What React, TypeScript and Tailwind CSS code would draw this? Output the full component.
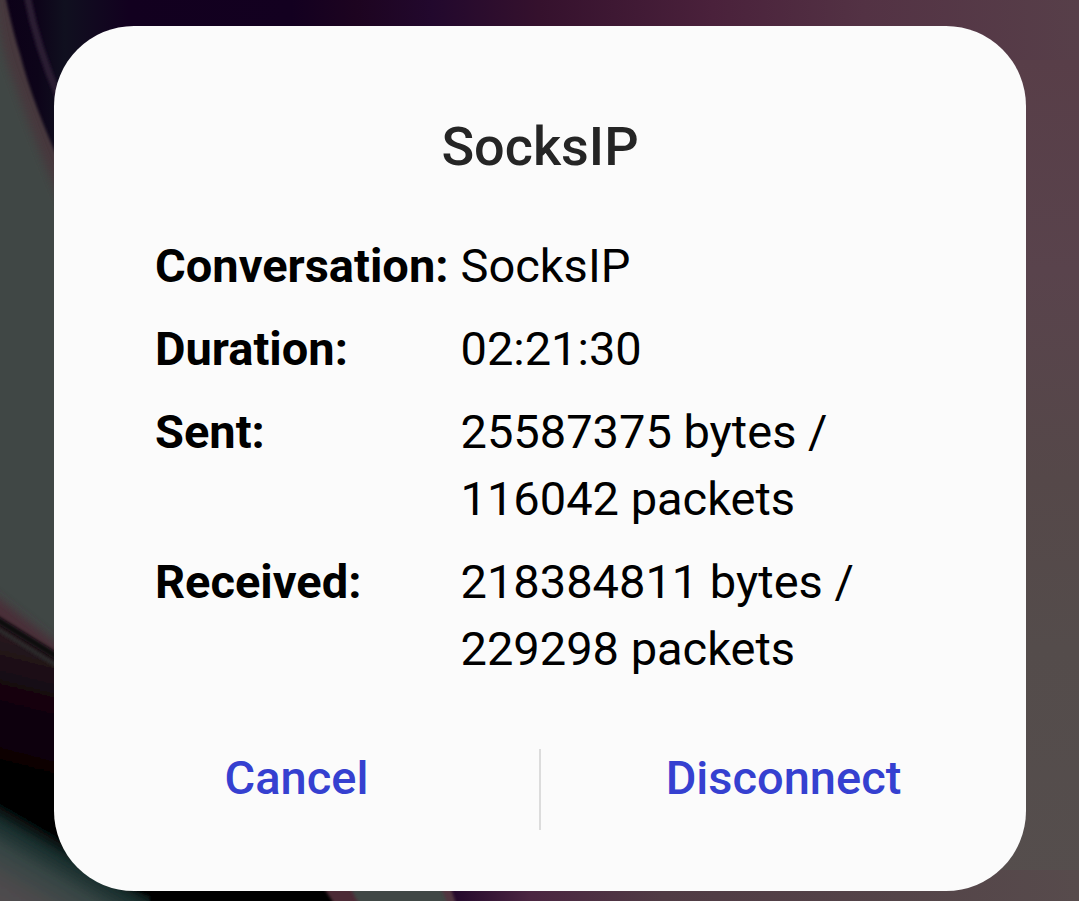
import { Fragment } from "react";

const stats = [
  { label: "Conversation:", value: "SocksIP" },
  { label: "Duration:", value: "02:21:30" },
  { label: "Sent:", value: "25587375 bytes / 116042 packets" },
  { label: "Received:", value: "218384811 bytes / 229298 packets" },
];

function Wallpaper() {
  return (
    <svg
      className="absolute inset-0 h-full w-full"
      viewBox="0 0 1079 901"
      preserveAspectRatio="none"
      aria-hidden="true"
    >
      <defs>
        <linearGradient id="sky" x1="0" x2="1" y1="0" y2="0">
          <stop offset="0" stopColor="#0c0018" />
          <stop offset="0.035" stopColor="#0d0419" />
          <stop offset="0.06" stopColor="#10101f" />
          <stop offset="0.12" stopColor="#12001f" />
          <stop offset="0.27" stopColor="#130020" />
          <stop offset="0.33" stopColor="#1d0420" />
          <stop offset="0.4" stopColor="#22082d" />
          <stop offset="0.5" stopColor="#35112d" />
          <stop offset="0.66" stopColor="#4a213b" />
          <stop offset="0.8" stopColor="#533244" />
          <stop offset="1" stopColor="#573f49" />
        </linearGradient>
        <linearGradient id="edge" x1="0" x2="0" y1="0" y2="1">
          <stop offset="0" stopColor="#583e48" />
          <stop offset="0.25" stopColor="#59434c" />
          <stop offset="0.5" stopColor="#554849" />
          <stop offset="0.7" stopColor="#544c4b" />
          <stop offset="1" stopColor="#554e4d" />
        </linearGradient>
        <linearGradient id="floor" x1="0" x2="1" y1="0" y2="0">
          <stop offset="0" stopColor="#1d0428" />
          <stop offset="0.14" stopColor="#4b2541" />
          <stop offset="0.35" stopColor="#503b44" />
          <stop offset="1" stopColor="#574b4c" />
        </linearGradient>
        <linearGradient
          id="shade"
          gradientUnits="userSpaceOnUse"
          x1="40"
          x2="4"
          y1="650"
          y2="790"
        >
          <stop offset="0" stopColor="#25171c" />
          <stop offset="0.3" stopColor="#140610" />
          <stop offset="0.65" stopColor="#0b0208" />
          <stop offset="1" stopColor="#000000" />
        </linearGradient>
        <linearGradient
          id="ground"
          gradientUnits="userSpaceOnUse"
          x1="40"
          x2="-4"
          y1="824"
          y2="900"
        >
          <stop offset="0" stopColor="#000000" />
          <stop offset="0.2" stopColor="#172c2b" />
          <stop offset="0.45" stopColor="#354443" />
          <stop offset="0.8" stopColor="#4c4a4c" />
          <stop offset="1" stopColor="#504b4e" />
        </linearGradient>
        <filter id="soft" filterUnits="userSpaceOnUse" x="-40" y="-40" width="1159" height="981">
          <feGaussianBlur stdDeviation="1.5" />
        </filter>
        <filter id="softer" filterUnits="userSpaceOnUse" x="-40" y="-40" width="1159" height="981">
          <feGaussianBlur stdDeviation="5" />
        </filter>
      </defs>

      <rect width="1079" height="901" fill="url(#sky)" />
      <rect x="1000" y="60" width="79" height="841" fill="url(#edge)" />
      <rect x="440" y="870" width="639" height="31" fill="url(#floor)" />

      {/* Left rim */}
      <path
        d="M-20 -20H2Q12 30 20 54Q33 105 64 172V640H-20Z"
        fill="#46393d"
        filter="url(#soft)"
      />
      <path
        d="M-20 -20H-8Q-2 45 15 85Q34 140 66 215V660H-20Z"
        fill="#404645"
        filter="url(#softer)"
      />
      <path
        d="M26 -10Q36 45 60 100"
        fill="none"
        stroke="#291b31"
        strokeWidth="7"
        filter="url(#soft)"
      />

      {/* Lower fold */}
      <path d="M-30 576L90 669V800H-30Z" fill="#4a2e39" filter="url(#softer)" />
      <path d="M-30 606L90 680V901H-30Z" fill="url(#shade)" filter="url(#soft)" />
      <path
        d="M-20 618L80 680"
        fill="none"
        stroke="#2a2b2b"
        strokeWidth="4"
        filter="url(#soft)"
      />
      <path
        d="M-20 609L80 671"
        fill="none"
        stroke="#09070a"
        strokeWidth="7"
        filter="url(#soft)"
      />
      <rect x="50" y="780" width="300" height="121" fill="#000000" />
      <path
        d="M-40 776L54 834L110 882L150 896V920H-40Z"
        fill="url(#ground)"
        filter="url(#soft)"
      />

      {/* Bottom edge */}
      <path d="M322 885H362V910H338Z" fill="#4b2935" filter="url(#soft)" />
      <path d="M346 880H442L456 910H362Z" fill="#404645" filter="url(#soft)" />
      <path d="M440 885H450L458 910H450Z" fill="#51343f" filter="url(#soft)" />
    </svg>
  );
}

export default function App() {
  return (
    <main className="relative min-h-screen overflow-hidden bg-[#404645] pt-[26px] pr-[53px] pb-[10px] pl-[54px] font-['Roboto',sans-serif]">
      <Wallpaper />

      <div
        role="dialog"
        aria-labelledby="dialog-title"
        className="relative rounded-[80px] bg-[#fbfbfb] pt-[89px] pb-[61px]"
      >
        <h1
          id="dialog-title"
          className="text-center text-[54px] leading-[64px] font-medium text-[#252525]"
        >
          SocksIP
        </h1>

        <dl className="mt-[53px] grid grid-cols-[auto_1fr] gap-x-3 gap-y-4 px-[101px] text-[47px] leading-[67px] text-black">
          {stats.map((stat) => (
            <Fragment key={stat.label}>
              <dt className="font-bold">{stat.label}</dt>
              <dd>{stat.value}</dd>
            </Fragment>
          ))}
        </dl>

        {/* Actions */}
        <div className="mt-[67px] flex items-start text-[47px] leading-[58px] font-medium text-[#3540d0]">
          <button type="button" className="flex-1 cursor-pointer">
            Cancel
          </button>
          <div className="h-[81px] w-[2px] bg-[#dcdcdc]" />
          <button type="button" className="flex-1 cursor-pointer">
            Disconnect
          </button>
        </div>
      </div>
    </main>
  );
}
